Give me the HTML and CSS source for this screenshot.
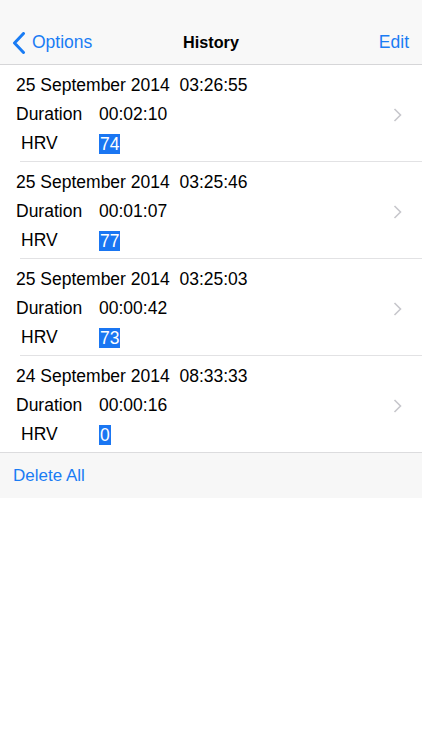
FILE: index.html
```
<!DOCTYPE html>
<html>
<head>
<meta charset="utf-8">
<link rel="stylesheet" href="styles.css">
</head>
<body>
<div class="top">
  <div class="status"></div>
  <div class="nav">
    <div class="back">
      <svg class="back-icon" width="14" height="22" viewBox="0 0 14 22"><path d="M11.5 1.5 L2.5 11 L11.5 20.5" fill="none" stroke="#1a7cf4" stroke-width="3" stroke-linecap="round" stroke-linejoin="round"/></svg>
      <span>Options</span>
    </div>
    <div class="title">History</div>
    <div class="edit">Edit</div>
  </div>
</div>
<div class="list">
  <div class="row">
    <div class="info">
      <div class="line">25 September 2014&nbsp;&nbsp;03:26:55</div>
      <div class="line"><span class="lbl">Duration</span><span>00:02:10</span></div>
      <div class="line"><span class="lbl hrv">HRV</span><span class="sel">74</span></div>
    </div>
    <svg class="chev" width="9" height="14" viewBox="0 0 9 14"><path d="M1.5 1 L7.5 7 L1.5 13" fill="none" stroke="#c7c7cc" stroke-width="1.6"/></svg>
  </div>
  <div class="row">
    <div class="info">
      <div class="line">25 September 2014&nbsp;&nbsp;03:25:46</div>
      <div class="line"><span class="lbl">Duration</span><span>00:01:07</span></div>
      <div class="line"><span class="lbl hrv">HRV</span><span class="sel">77</span></div>
    </div>
    <svg class="chev" width="9" height="14" viewBox="0 0 9 14"><path d="M1.5 1 L7.5 7 L1.5 13" fill="none" stroke="#c7c7cc" stroke-width="1.6"/></svg>
  </div>
  <div class="row">
    <div class="info">
      <div class="line">25 September 2014&nbsp;&nbsp;03:25:03</div>
      <div class="line"><span class="lbl">Duration</span><span>00:00:42</span></div>
      <div class="line"><span class="lbl hrv">HRV</span><span class="sel">73</span></div>
    </div>
    <svg class="chev" width="9" height="14" viewBox="0 0 9 14"><path d="M1.5 1 L7.5 7 L1.5 13" fill="none" stroke="#c7c7cc" stroke-width="1.6"/></svg>
  </div>
  <div class="row last">
    <div class="info">
      <div class="line">24 September 2014&nbsp;&nbsp;08:33:33</div>
      <div class="line"><span class="lbl">Duration</span><span>00:00:16</span></div>
      <div class="line"><span class="lbl hrv">HRV</span><span class="sel">0</span></div>
    </div>
    <svg class="chev" width="9" height="14" viewBox="0 0 9 14"><path d="M1.5 1 L7.5 7 L1.5 13" fill="none" stroke="#c7c7cc" stroke-width="1.6"/></svg>
  </div>
</div>
<div class="toolbar">Delete All</div>
</body>
</html>
```
FILE: styles.css
```
html, body {
  margin: 0;
  padding: 0;
  background: #ffffff;
}
body {
  font-family: "Liberation Sans", Arial, sans-serif;
  font-size: 17.5px;
  color: #000;
  width: 422px;
}
.top {
  background: #f8f8f8;
  border-bottom: 1px solid #d6d6d8;
}
.status {
  height: 21px;
}
.nav {
  height: 43px;
  display: grid;
  grid-template-columns: 1fr auto 1fr;
  align-items: center;
  padding: 0 13px 0 12px;
}
.back {
  display: flex;
  align-items: center;
  color: #1a7cf4;
  font-size: 17.5px;
  gap: 6px;
}
.back-icon {
  display: block;
}
.title {
  text-align: center;
  font-weight: bold;
  font-size: 16.2px;
  padding-left: 1px;
}
.edit {
  color: #1a7cf4;
  font-size: 17.5px;
  text-align: right;
}
.list {
  background: #fff;
}
.row {
  display: flex;
  align-items: center;
  padding: 6px 16px 3px 16px;
  height: 87px;
  position: relative;
}
.row::after {
  content: "";
  position: absolute;
  left: 20px;
  right: 0;
  bottom: -1px;
  height: 1px;
  background: #e2e2e4;
}
.row + .row {
  margin-top: 1px;
}
.row.last::after {
  display: none;
}
.info {
  flex: 1;
}
.line {
  height: 29px;
  line-height: 29px;
  display: flex;
  align-items: center;
  white-space: nowrap;
}
.lbl {
  width: 83px;
}
.lbl.hrv {
  width: 78px;
  padding-left: 5px;
}
.sel {
  background: #1a76f2;
  color: #fff;
  line-height: 20px;
  height: 20px;
  padding: 0 1px;
}
.chev {
  display: block;
  margin-right: 4px;
}
.toolbar {
  background: #f7f7f7;
  border-top: 1px solid #dcdcde;
  height: 45px;
  line-height: 45px;
  padding-left: 13px;
  color: #1a7cf4;
  font-size: 17px;
}
```
